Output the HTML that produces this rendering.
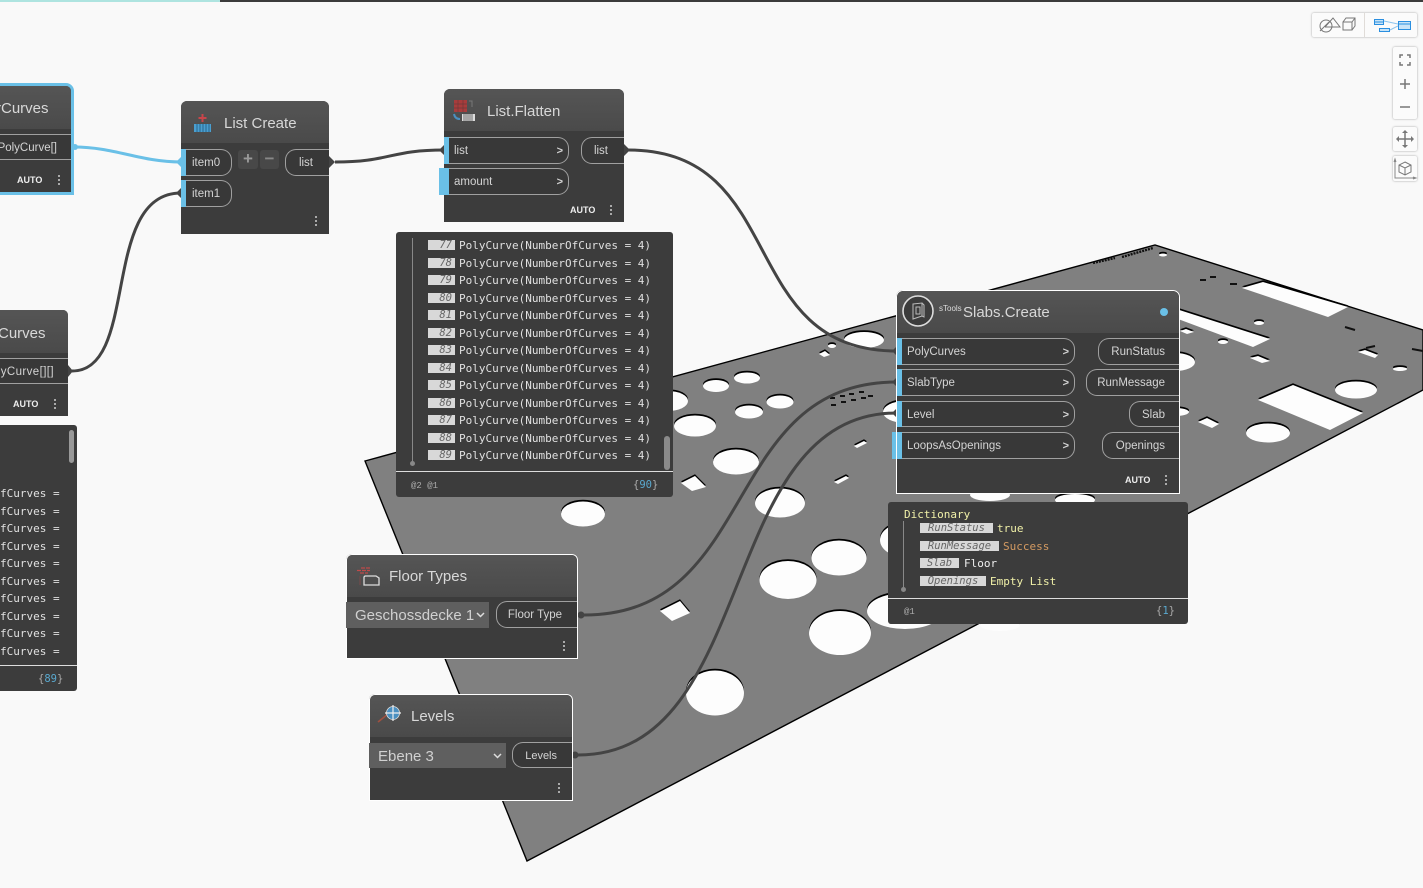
<!DOCTYPE html>
<html><head><meta charset="utf-8">
<style>
html,body{margin:0;padding:0;width:1423px;height:888px;overflow:hidden;background:#f9f9f9;font-family:"Liberation Sans",sans-serif}
.a{position:absolute}
svg.full{position:absolute;left:0;top:0}
.n{position:absolute;background:#3c3c3c;overflow:hidden;box-sizing:border-box}
.wb{outline:1px solid #fff;outline-offset:-1px}
.h{position:absolute;left:0;right:0;top:0;background:linear-gradient(#555,#4a4a4a)}
.t{position:absolute;font-size:15px;color:#d8d8d8;white-space:nowrap;line-height:18px;margin-top:1px}
.p{position:absolute;box-sizing:border-box;border:1px solid #a0a0a0;background:#383838;color:#d4d4d4;font-size:11.5px;line-height:27px;white-space:nowrap}
.l{border-radius:0 11px 11px 0;border-left:none;padding-left:6px}
.r{border-radius:11px 0 0 11px;border-right:none;text-align:right;padding-right:14px}
.p i{position:absolute;right:5px;top:0;font-style:normal;font-weight:bold;font-size:11px}
.s{position:absolute;background:#6ac0e7;width:5px}
.auto{position:absolute;color:#eee;font-size:9px;font-weight:bold;line-height:12px}
.d{position:absolute;width:2px;height:2px;background:#aaa;box-shadow:0 4px 0 #aaa,0 8px 0 #aaa}
.w{position:absolute;background:#3c3c3c;border-radius:3px;overflow:hidden}
.m{position:absolute;font-family:"DejaVu Sans Mono","Liberation Mono",monospace;font-size:11px;line-height:14px;color:#e0e0e0;white-space:pre;margin-top:2px}
.ix{position:absolute;width:27px;height:10px;background:#d8d8d8;color:#666;font:italic 10.5px/11px "DejaVu Sans Mono","Liberation Mono",monospace;text-align:right;box-sizing:border-box;padding-right:3px;overflow:hidden}
.f{position:absolute;font-family:"Liberation Mono",monospace;font-size:9px;color:#aaa;margin-top:1px}
.dd{position:absolute;background:#5f5f5f;color:#d0d0d0;font-size:15px;line-height:28px;white-space:nowrap;box-sizing:border-box;padding-left:9px}
.pn{position:absolute;background:#fbfbfb;box-shadow:0 0 2px rgba(0,0,0,.35);border-radius:2px}
</style></head><body>

<svg class="full" width="1423" height="888" viewBox="0 0 1423 888">
<defs>
<g id="h">
<ellipse cx="583" cy="514" rx="22" ry="12.5"/><ellipse cx="668" cy="401" rx="20" ry="10"/><ellipse cx="695" cy="426" rx="21" ry="10.5"/>
<ellipse cx="716" cy="386" rx="13" ry="6"/><ellipse cx="747" cy="378" rx="13" ry="5.5"/><ellipse cx="749" cy="412" rx="14" ry="6.5"/>
<ellipse cx="780" cy="402" rx="13.5" ry="6.5"/><ellipse cx="736" cy="462" rx="23" ry="12.5"/><ellipse cx="780" cy="503" rx="25" ry="14.5"/>
<ellipse cx="839" cy="558" rx="27.5" ry="17.5"/><ellipse cx="788" cy="580" rx="28.5" ry="19"/><ellipse cx="840" cy="633" rx="31" ry="22"/>
<ellipse cx="715" cy="693" rx="29" ry="22.5"/><ellipse cx="864" cy="340" rx="20" ry="8"/><ellipse cx="905" cy="412" rx="22" ry="11"/>
<ellipse cx="1268" cy="433" rx="22" ry="9.5"/><ellipse cx="1356" cy="390" rx="21" ry="8.5"/><ellipse cx="1175" cy="362" rx="20" ry="9"/>
<ellipse cx="1175" cy="412" rx="14" ry="4"/><ellipse cx="905" cy="540" rx="25" ry="17"/><ellipse cx="905" cy="611" rx="38" ry="18"/>
<ellipse cx="990" cy="495" rx="20" ry="6"/><ellipse cx="1075" cy="500" rx="20" ry="6"/><ellipse cx="1000" cy="625" rx="20" ry="6"/>
<ellipse cx="832" cy="346" rx="4" ry="2"/><ellipse cx="1259" cy="323" rx="5" ry="2"/><ellipse cx="1223" cy="342" rx="5" ry="2"/>
<ellipse cx="1400" cy="369" rx="7" ry="2"/><ellipse cx="1163" cy="255" rx="4" ry="1.5"/>
<polygon points="681,483 695,476 706,487 692,491"/><polygon points="660,611 680,601 690,613 672,621"/>
<polygon points="1242,288 1263,282 1348,307 1328,317"/><polygon points="1170,307 1270,339 1253,347 1170,316"/>
<polygon points="1258,400 1293,385 1363,413 1330,430"/><polygon points="1250,358 1258,356 1270,361 1262,363"/>
<polygon points="1198,422 1207,418 1219,424 1212,428"/><polygon points="1358,352 1365,350 1378,355 1375,358"/>
<polygon points="1180,331 1186,329 1194,332 1187,334"/><polygon points="819,354 825,351 830,355 824,357"/>
<polygon points="854,446 864,441 867,443 857,448"/><polygon points="834,482 846,476 849,478 838,484"/>
</g>
</defs>
<polygon points="365,461 1155,245 1423,330 1423,390 527,861" fill="#808080" stroke="#000" stroke-width="1.4"/>
<use href="#h" fill="#000" transform="translate(0,-1.8)"/>
<use href="#h" fill="#fdfdfd"/>
<path d="M1093 263L1115 258M1122 257L1153 248" stroke="#111" stroke-width="2.4" stroke-dasharray="2 1"/>
<path d="M1200 280h6M1210 277h6M1230 284h7M1345 327l10 3M1366 348l9-2M1412 349l11 2M830 398h5M840 396h5M849 394h5M859 392h5M831 405h5M841 402h5M851 400h5M861 398h5M868 396h5" stroke="#111" stroke-width="2"/>
<!-- wires -->
<g fill="none" stroke="#444" stroke-width="3">
<path d="M72 371C140 371 100 193 181 193"/>
<path d="M335 162C390 162 390 150 444 150"/>
<path d="M628 150C790 150 735 351 897 351"/>
<path d="M584 615C760 615 720 382 897 382"/>
<path d="M578 755C760 755 715 413 897 413"/>
</g>
<path d="M74 147C115 147 140 162 181 162" fill="none" stroke="#6ac0e7" stroke-width="3"/>
<g fill="#444">
<path d="M181 188l-5 5 5 5zM329 156l6 6-6 6zM444 145l-5 5 5 5zM624 144l6 6-6 6zM68 365l5 6-5 6zM897 346l-5 5 5 5zM897 377l-5 5 5 5zM897 408l-5 5 5 5z"/>
<circle cx="581" cy="615" r="3.5"/><circle cx="575" cy="755" r="3.5"/>
</g>
<path d="M181 157l-5 5 5 5z" fill="#6ac0e7"/>
<circle cx="75" cy="147" r="3" fill="#6ac0e7"/>
</svg>

<div class="a" style="left:0;top:0;width:220px;height:2px;background:#aee4e0"></div>
<div class="a" style="left:220px;top:0;width:1203px;height:2px;background:#3c3c3c"></div>

<!-- Left node 1 -->
<div class="a" style="left:-4px;top:83px;width:78px;height:112px;background:#6ac0e7;border-radius:0 8px 0 0"></div>
<div class="n" style="left:0;top:86px;width:71px;height:106px;border-radius:0 5px 0 0">
<div class="h" style="height:43px"></div>
<div class="t" style="left:-4px;top:13px">rCurves</div>
<div class="a" style="left:-20px;top:48px;width:91px;height:26px;border-top:1px solid #a0a0a0;border-bottom:1px solid #a0a0a0;box-sizing:border-box;background:#383838;color:#d4d4d4;font-size:11.5px;line-height:26px;text-align:right;padding-right:14px;white-space:nowrap">PolyCurve[]</div>
<div class="auto" style="left:17px;top:88px">AUTO</div><div class="d" style="left:58px;top:89px"></div>
</div>

<!-- Left node 2 -->
<div class="n" style="left:0;top:310px;width:68px;height:106px;border-radius:0 5px 0 0">
<div class="h" style="height:43px"></div>
<div class="t" style="left:-2px;top:14px">Curves</div>
<div class="a" style="left:-20px;top:48px;width:88px;height:26px;border-top:1px solid #a0a0a0;border-bottom:1px solid #a0a0a0;box-sizing:border-box;background:#383838;color:#d4d4d4;font-size:11.5px;line-height:26px;text-align:right;padding-right:14px;white-space:nowrap;letter-spacing:.4px">yCurve[][]</div>
<div class="auto" style="left:13px;top:88px">AUTO</div><div class="d" style="left:54px;top:89px"></div>
</div>

<!-- Left watch -->
<div class="w" style="left:-4px;top:425px;width:81px;height:266px">
<div class="m" style="left:4px;top:58px;line-height:17.55px">fCurves = 
fCurves = 
fCurves = 
fCurves = 
fCurves = 
fCurves = 
fCurves = 
fCurves = 
fCurves = 
fCurves = </div>
<div class="a" style="left:73px;top:5px;width:5px;height:33px;background:#999;border-radius:3px"></div>
<div class="a" style="left:0;top:240px;width:81px;height:1px;background:#ddd"></div>
<div class="m" style="left:42px;top:245px;font-size:10.5px;color:#aaa">{<span style="color:#5aa9cf">89</span>}</div>
</div>

<!-- List Create -->
<div class="n" style="left:181px;top:101px;width:148px;height:133px;border-radius:6px 6px 0 0">
<div class="h" style="height:42px"></div>
<svg class="a" style="left:12px;top:10px" width="20" height="22" viewBox="0 0 20 22"><path d="M9.5 3v8M5.5 7h8" stroke="#c8454a" stroke-width="2"/><rect x="1" y="13" width="17" height="8" fill="#4a9fd0"/><path d="M4 13v8M7 13v8M10 13v8M13 13v8M16 13v8" stroke="#23567a" stroke-width=".8"/></svg>
<div class="t" style="left:43px;top:13px">List Create</div>
<div class="p l" style="left:5px;top:48px;width:46px;height:27px">item0</div>
<div class="p l" style="left:5px;top:79px;width:46px;height:27px">item1</div>
<div class="s" style="left:0;top:48px;height:27px"></div><div class="s" style="left:0;top:79px;height:27px"></div>
<div class="a" style="left:57px;top:49px;width:20px;height:19px;background:#484848;border-radius:3px;color:#999;font-size:17px;line-height:18px;text-align:center;font-weight:bold">+</div>
<div class="a" style="left:79px;top:49px;width:19px;height:19px;background:#484848;border-radius:3px;color:#888;font-size:17px;line-height:17px;text-align:center;font-weight:bold">−</div>
<div class="p r" style="left:104px;top:48px;width:44px;height:27px;padding-right:16px">list</div>
<div class="d" style="left:134px;top:115px"></div>
</div>

<!-- List.Flatten -->
<div class="s" style="left:439px;top:168px;height:27px"></div>
<div class="n" style="left:444px;top:89px;width:180px;height:133px;border-radius:6px 6px 0 0">
<div class="h" style="height:42px"></div>
<svg class="a" style="left:9px;top:10px" width="24" height="24" viewBox="0 0 24 24"><rect x="1" y="1" width="13" height="12" fill="#a83c3c"/><path d="M1 5h13M1 9h13M5 1v12M10 1v12" stroke="#6e3a3a" stroke-width=".7"/><path d="M16 2h3v6" fill="none" stroke="#777"/><path d="M1 15q1 5 6 5" fill="none" stroke="#4a8fc0" stroke-width="2"/><rect x="9" y="15" width="13" height="7" fill="#ddd"/><path d="M11 15v7M13 15v7M15 15v7M17 15v7M19 15v7" stroke="#555" stroke-width=".8"/></svg>
<div class="t" style="left:43px;top:13px">List.Flatten</div>
<div class="p l" style="left:5px;top:48px;width:120px;height:27px;padding-left:5px">list<i>&gt;</i></div>
<div class="p l" style="left:5px;top:79px;width:120px;height:27px;padding-left:5px">amount<i>&gt;</i></div>
<div class="s" style="left:0;top:48px;height:27px"></div><div class="s" style="left:0;top:79px;height:27px"></div>
<div class="p r" style="left:137px;top:48px;width:43px;height:27px;padding-right:16px">list</div>
<div class="auto" style="left:126px;top:115px">AUTO</div><div class="d" style="left:166px;top:116px"></div>
</div>

<!-- Watch 1 -->
<div class="w" style="left:396px;top:232px;width:277px;height:265px">
<div class="a" style="left:16px;top:6px;width:1px;height:225px;background:#888"></div>
<div class="a" style="left:14px;top:229px;width:5px;height:5px;border-radius:50%;background:#888"></div>
<div class="ix" style="left:32px;top:8px">77</div><div class="ix" style="left:32px;top:26px">78</div><div class="ix" style="left:32px;top:43px">79</div><div class="ix" style="left:32px;top:61px">80</div><div class="ix" style="left:32px;top:78px">81</div><div class="ix" style="left:32px;top:96px">82</div><div class="ix" style="left:32px;top:113px">83</div><div class="ix" style="left:32px;top:131px">84</div><div class="ix" style="left:32px;top:148px">85</div><div class="ix" style="left:32px;top:166px">86</div><div class="ix" style="left:32px;top:183px">87</div><div class="ix" style="left:32px;top:201px">88</div><div class="ix" style="left:32px;top:218px">89</div>
<div class="m" style="left:63px;top:3px;line-height:17.5px">PolyCurve(NumberOfCurves = 4)
PolyCurve(NumberOfCurves = 4)
PolyCurve(NumberOfCurves = 4)
PolyCurve(NumberOfCurves = 4)
PolyCurve(NumberOfCurves = 4)
PolyCurve(NumberOfCurves = 4)
PolyCurve(NumberOfCurves = 4)
PolyCurve(NumberOfCurves = 4)
PolyCurve(NumberOfCurves = 4)
PolyCurve(NumberOfCurves = 4)
PolyCurve(NumberOfCurves = 4)
PolyCurve(NumberOfCurves = 4)
PolyCurve(NumberOfCurves = 4)</div>
<div class="a" style="left:268px;top:204px;width:6px;height:34px;background:#8a8a8a;border-radius:3px"></div>
<div class="a" style="left:0;top:239px;width:277px;height:1px;background:#ddd"></div>
<div class="f" style="left:15px;top:248px">@2 @1</div>
<div class="m" style="left:237px;top:244px;font-size:10.5px;color:#aaa">{<span style="color:#5aa9cf">90</span>}</div>
</div>

<!-- Slabs.Create -->
<div class="s" style="left:892px;top:432px;height:27px"></div>
<div class="n wb" style="left:896px;top:290px;width:284px;height:204px;border-radius:7px 7px 0 0">
<div class="h" style="height:42px;border-radius:7px 7px 0 0;margin:1px 1px 0"></div>
<svg class="a" style="left:5px;top:4px" width="34" height="34" viewBox="0 0 34 34"><circle cx="17" cy="17" r="15" fill="#3c3c3c" stroke="#ddd" stroke-width="1.6"/><path d="M12 10l9-1v13l-9 3zM15 13h4v7h-4zM21 9l2 2v12l-2-1" fill="none" stroke="#bbb"/></svg>
<div class="a" style="left:43px;top:14px;color:#ddd;font-size:8px;line-height:10px">sTools</div>
<div class="t" style="left:67px;top:13px">Slabs.Create</div>
<div class="a" style="left:264px;top:18px;width:8px;height:8px;border-radius:50%;background:#6ac0e7"></div>
<div class="p l" style="left:5px;top:48px;width:174px;height:27px">PolyCurves<i>&gt;</i></div>
<div class="p l" style="left:5px;top:79px;width:174px;height:27px">SlabType<i>&gt;</i></div>
<div class="p l" style="left:5px;top:111px;width:174px;height:26px;line-height:26px">Level<i>&gt;</i></div>
<div class="p l" style="left:5px;top:142px;width:174px;height:27px">LoopsAsOpenings<i>&gt;</i></div>
<div class="s" style="left:1px;top:48px;height:27px"></div><div class="s" style="left:1px;top:79px;height:27px"></div><div class="s" style="left:1px;top:111px;height:26px"></div><div class="s" style="left:1px;top:142px;height:27px"></div>
<div class="p r" style="left:202px;top:48px;width:81px;height:27px">RunStatus</div>
<div class="p r" style="left:190px;top:79px;width:93px;height:27px">RunMessage</div>
<div class="p r" style="left:233px;top:111px;width:50px;height:26px;line-height:26px">Slab</div>
<div class="p r" style="left:206px;top:142px;width:77px;height:27px">Openings</div>
<div class="auto" style="left:229px;top:184px">AUTO</div><div class="d" style="left:269px;top:185px"></div>
</div>

<!-- Dictionary watch -->
<div class="w" style="left:888px;top:502px;width:300px;height:122px">
<div class="a" style="left:15px;top:19px;width:1px;height:68px;background:#888"></div>
<div class="a" style="left:13px;top:85px;width:5px;height:5px;border-radius:50%;background:#888"></div>
<div class="m" style="left:16px;top:4px;color:#f0f0a8">Dictionary</div>
<div class="ix" style="left:32px;top:21px;width:73px;padding:0;text-align:center">RunStatus</div><div class="m" style="left:109px;top:18px;color:#f0f0a8">true</div>
<div class="ix" style="left:32px;top:39px;width:79px;padding:0;text-align:center">RunMessage</div><div class="m" style="left:115px;top:36px;color:#d39a62">Success</div>
<div class="ix" style="left:32px;top:56px;width:39px;padding:0;text-align:center">Slab</div><div class="m" style="left:76px;top:53px;color:#eee">Floor</div>
<div class="ix" style="left:32px;top:74px;width:66px;padding:0;text-align:center">Openings</div><div class="m" style="left:102px;top:71px;color:#f0f0a8">Empty List</div>
<div class="a" style="left:0;top:96px;width:300px;height:1px;background:#ddd"></div>
<div class="f" style="left:16px;top:104px">@1</div>
<div class="m" style="left:268px;top:100px;font-size:10.5px;color:#aaa">{<span style="color:#5aa9cf">1</span>}</div>
</div>

<!-- Floor Types -->
<div class="n wb" style="left:346px;top:554px;width:232px;height:105px;border-radius:6px 6px 0 0">
<div class="h" style="height:42px;margin:1px 1px 0;border-radius:6px 6px 0 0"></div>
<svg class="a" style="left:10px;top:10px" width="26" height="24" viewBox="0 0 26 24"><path d="M5 4h10M1 6.5h13M4 9h8" stroke="#c04a4a" stroke-width="1.2" stroke-dasharray="4 1"/><path d="M8 13v8h15v-7l-3-2H9z" fill="none" stroke="#ddd" stroke-width="1.3"/><path d="M4 12v9" stroke="#7a4a4a"/></svg>
<div class="t" style="left:43px;top:13px">Floor Types</div>
<div class="dd" style="left:0;top:48px;width:143px;height:26px">Geschossdecke 1<svg class="a" style="left:130px;top:10px" width="9" height="6"><path d="M1 1l3.5 3.5L8 1" fill="none" stroke="#ddd" stroke-width="1.5"/></svg></div>
<div class="p r" style="left:150px;top:47px;width:81px;height:27px;font-size:11.5px;padding-right:15px">Floor Type</div>
<div class="d" style="left:217px;top:87px"></div>
</div>

<!-- Levels -->
<div class="n wb" style="left:369px;top:694px;width:204px;height:107px;border-radius:6px 6px 0 0">
<div class="h" style="height:42px;margin:1px 1px 0;border-radius:6px 6px 0 0"></div>
<svg class="a" style="left:8px;top:11px" width="26" height="20" viewBox="0 0 26 20"><path d="M1 17L11 9" stroke="#a05040" stroke-width="1.6"/><circle cx="16" cy="8" r="6.5" fill="#4a8fc0" stroke="#ddd" stroke-width=".8"/><path d="M16 0v16M8 8h16" stroke="#eee" stroke-width="1.2"/></svg>
<div class="t" style="left:42px;top:13px">Levels</div>
<div class="dd" style="left:0;top:49px;width:137px;height:25px">Ebene 3<svg class="a" style="left:124px;top:10px" width="9" height="6"><path d="M1 1l3.5 3.5L8 1" fill="none" stroke="#ddd" stroke-width="1.5"/></svg></div>
<div class="p r" style="left:143px;top:48px;width:60px;height:26px;line-height:26px;font-size:11px;padding-right:15px">Levels</div>
<div class="d" style="left:189px;top:89px"></div>
</div>

<!-- Top-right controls -->
<div class="pn" style="left:1312px;top:13px;width:105px;height:24px"></div>
<div class="a" style="left:1364px;top:13px;width:1px;height:24px;background:#e0dcd8"></div>
<div class="pn" style="left:1393px;top:47px;width:24px;height:72px"></div>
<div class="pn" style="left:1393px;top:127px;width:24px;height:24px"></div>
<div class="pn" style="left:1393px;top:156px;width:24px;height:25px"></div>
<svg class="full" width="1423" height="200" viewBox="0 0 1423 200" style="pointer-events:none">
<g fill="none" stroke="#777" stroke-width="1">
<circle cx="1326" cy="26" r="6"/><path d="M1325 27l8-9 7 9h-15M1320 31l9-9"/><path d="M1343 22h9v8h-9zM1343 22l3-4h9v8l-3 4M1352 22l3-4"/>
<path d="M1395 160v18h20M1396 162l-1-3-1 3M1413 177l3 1-3 1" stroke="#888"/><path d="M1405 162l6 3v7l-6 3-6-3v-7zM1399 165l6 3 6-3M1405 168v7"/>
</g>
<g fill="#c8e4f8" stroke="#2a8fe0" stroke-width="1"><rect x="1374.5" y="19.5" width="9" height="5"/><rect x="1398.5" y="21.5" width="12" height="8"/><rect x="1379.5" y="28.5" width="10" height="3"/></g>
<path d="M1374 22h9M1398 24h12" stroke="#2a8fe0"/><path d="M1384 21l14 3M1390 30l8-4" stroke="#8cc4ee" fill="none"/>
<g fill="none" stroke="#777" stroke-width="1.5">
<path d="M1400 58v-3h3M1407 55h3v3M1410 62v3h-3M1403 65h-3v-3"/>
<path d="M1400 84h10M1405 79v10M1400 107h10"/>
<path d="M1398 139h14M1405 132v14"/>
</g>
<path d="M1405 130l-3 3h6zM1405 148l-3-3h6zM1396 139l3-3v6zM1414 139l-3-3v6z" fill="#777"/>
</svg>
</body></html>
